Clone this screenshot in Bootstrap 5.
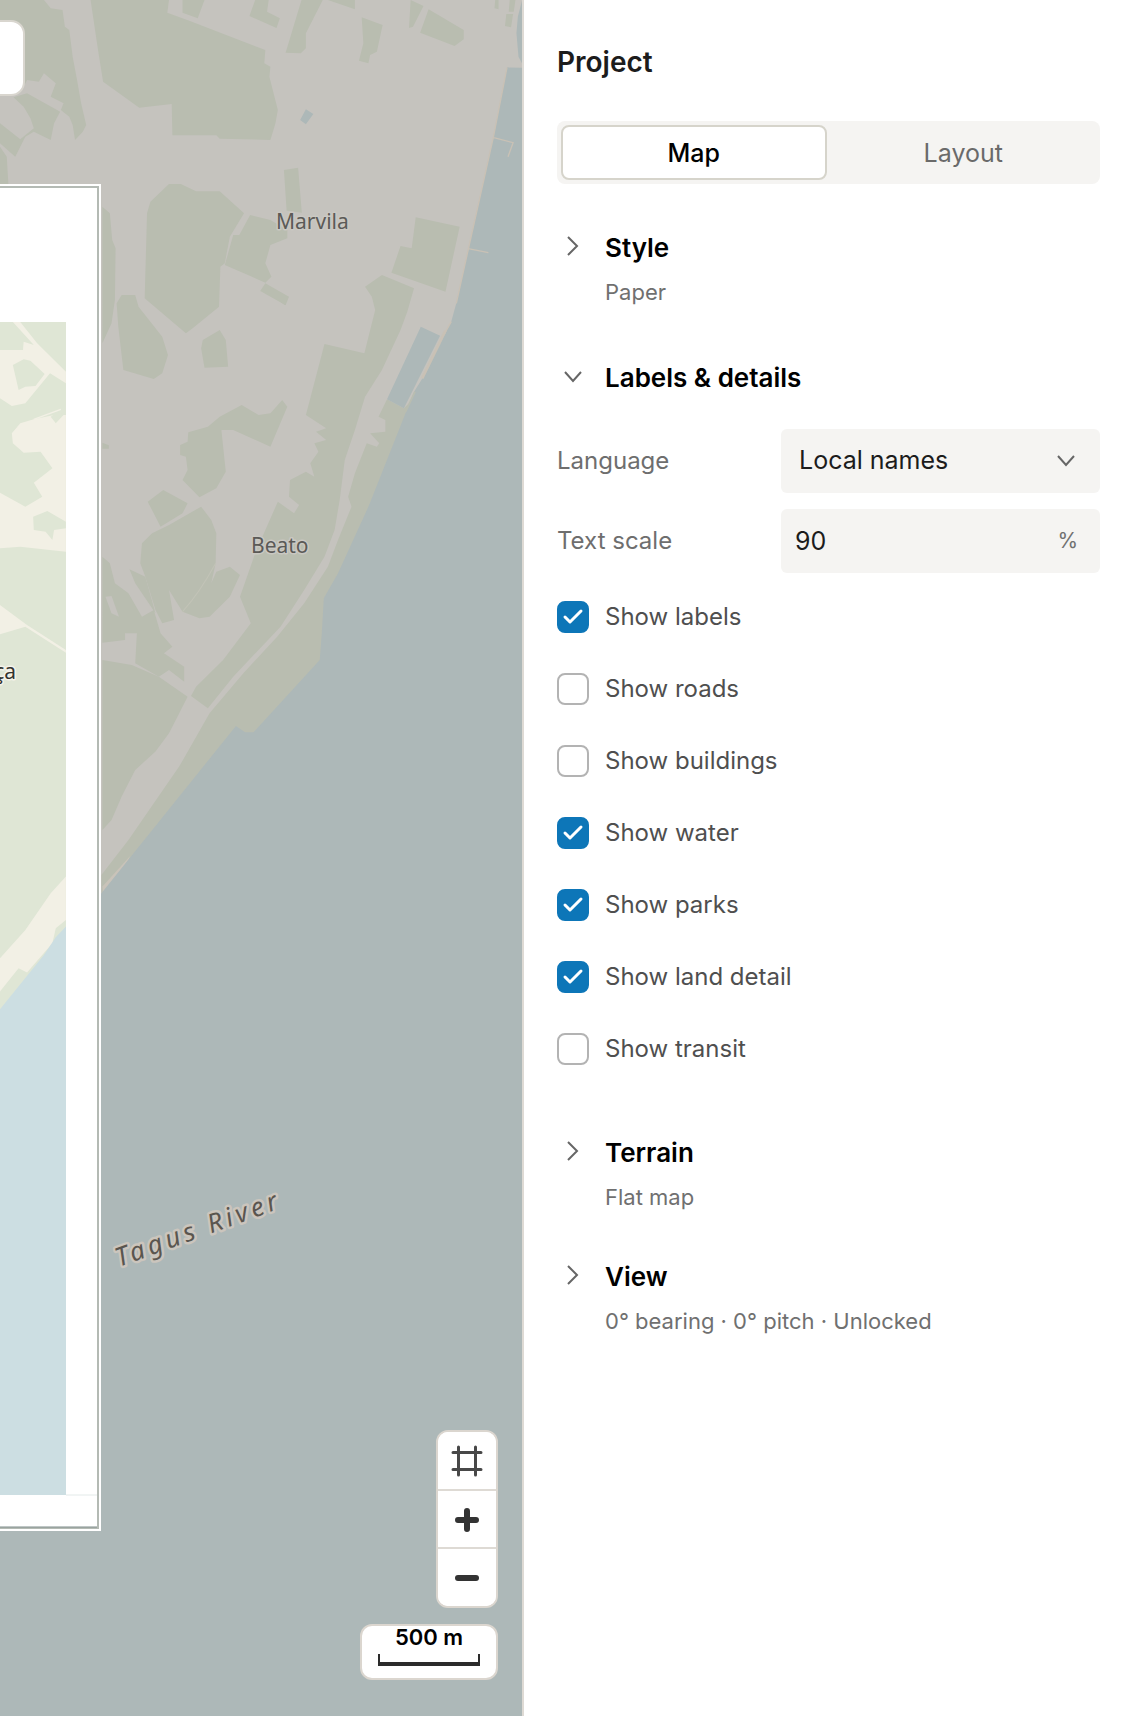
<!DOCTYPE html>
<html lang="en">
<head>
<meta charset="utf-8">
<meta name="viewport" content="width=device-width, initial-scale=1">
<title>Project map editor</title>
<link href="https://cdn.jsdelivr.net/npm/bootstrap@5.3.0/dist/css/bootstrap.min.css" rel="stylesheet">
<style>
  body { font-family: Inter, "Liberation Sans", sans-serif; font-size: 24px; line-height: 32px; color: #1c1c1c; background: #fff; }
  .map-area { min-width: 0; background: #adb8b8; overflow: hidden; }
  .map-canvas { position: absolute; inset: 0; width: 100%; height: 100%; }
  .map-canvas text { font-family: "Noto Sans", sans-serif; font-size: 21px; fill: #5b5a57; stroke: #cac8c2; stroke-width: 3px; paint-order: stroke; stroke-linejoin: round; }
  .map-canvas .river-name { font-size: 26px; font-style: italic; letter-spacing: 4px; fill: #5a554f; stroke: #cbc5bd; stroke-width: 5px; }
  .map-canvas .inset-name { fill: #33332f; stroke: #f5f3ea; }
  .toolbar-edge { position: absolute; left: -40px; top: 20px; width: 65px; height: 76px; background: #fff; border: 2px solid #d9d6cf; border-radius: 14px; }
  .map-tools { position: absolute; right: 24px; bottom: 36px; }
  .zoom-stack { width: 62px; border: 2px solid #dbd6cf; border-radius: 12px; overflow: hidden; background: #fff; }
  .zoom-stack .btn { height: 58px; border: 0; border-radius: 0; background: #fff; }
  .zoom-stack .btn + .btn { height: 59px; border-top: 2px solid #dedad4; }
  .scale-box { width: 138px; height: 56px; border: 2px solid #dbd6cf; border-radius: 12px; background: #fff; color: #000; font-size: 22px; line-height: 22px; font-weight: 600; }
  .scale-rule { width: 102px; height: 12px; border: 2px solid #2b2b2b; border-top: 0; border-bottom-width: 4px; margin-top: 6px; }
  .side-panel { flex: 0 0 608px; padding: 44px 30px 44px 33px; border-left: 2px solid #dedad4; background: #fff; }
  .panel-title { font-size: 28px; line-height: 36px; font-weight: 600; margin: 0 0 41px; color: #1c1c1c; }
  .tab-track { height: 63px; padding: 4px; background: #f5f4f2; border-radius: 8px; margin-bottom: 46px; }
  .tab-track .btn { flex: 1 1 0; font-size: 25px; line-height: 32px; font-weight: 400; padding: 0; color: #6a6a6a; border: 2px solid transparent; border-radius: 8px; }
  .tab-track .btn.active { background: #fff; border-color: #d6d4cb; color: #000; font-weight: 500; }
  .fold { font-size: 26px; line-height: 36px; font-weight: 600; color: #000; background: none; border: 0; padding: 0; text-align: left; }
  .fold svg { flex: none; margin-bottom: 4px; }
  .fold-note { margin: 10px 0 0 48px; font-size: 22px; line-height: 32px; color: #707070; }
  .group-open { margin-top: 52px; }
  .group-next { margin-top: 46px; }
  .fields { margin-top: 33px; }
  .field-label { width: 224px; flex: none; font-size: 24px; color: #6e6e6e; }
  .field { height: 64px; border: 0; border-radius: 6px; background-color: #f5f4f2; color: #1c1c1c; font-size: 25px; }
  select.field { padding: 0 60px 0 18px; background-size: 20px 20px; background-position: right 24px center;
    background-image: url("data:image/svg+xml,%3Csvg xmlns='http://www.w3.org/2000/svg' viewBox='0 0 20 20'%3E%3Cpath d='M2 5l8 9 8-9' fill='none' stroke='%23666' stroke-width='2'/%3E%3C/svg%3E"); }
  input.field { padding: 0 14px; }
  .unit { padding: 0 22px; font-size: 21px; color: #707070; background: #f5f4f2; border: 0; border-radius: 6px; }
  .checks { margin: 28px 0 70px; gap: 40px; }
  .checks .form-check { min-height: 32px; margin: 0; padding: 0; gap: 16px; }
  .checks .form-check-input { flex: none; width: 32px; height: 32px; margin: 0; border: 2px solid #b3b3b3; border-radius: 8px; }
  .checks .form-check-input:checked { background-color: #0d76b8; border-color: #0d76b8;
    background-size: 28px 28px; background-image: url("data:image/svg+xml,%3Csvg xmlns='http://www.w3.org/2000/svg' viewBox='0 0 28 28'%3E%3Cpath d='M6 14l5 5L22 8' fill='none' stroke='%23fff' stroke-width='3' stroke-linecap='round' stroke-linejoin='round'/%3E%3C/svg%3E"); }
  .checks .form-check-label { font-size: 24px; color: #4f4f4f; }
</style>
</head>
<body>
<div class="d-flex min-vh-100">
  <main class="map-area position-relative flex-grow-1">
    <svg class="map-canvas" viewBox="0 0 522 1716" preserveAspectRatio="xMaxYMin slice" role="img" aria-label="Map of Marvila, Beato and the Tagus River">
      <defs><clipPath id="insetClip"><rect x="0" y="322" width="66" height="1173"/></clipPath></defs>
      <rect width="522" height="1716" fill="#c5c3be"/>
      <!-- northern districts -->
      <g transform="scale(.338 .3333)" fill="#b9bdb0">
        <path d="M0 0H130L150 25 185 30 192 80 205 90 215 170 228 240 240 310 255 375 245 395 222 420 215 375 205 350 180 330 188 310 150 290 165 250 130 220 115 245 80 240 70 260 0 285Z"/>
        <path d="M40 292L80 280 178 335 160 370 150 420 100 395 75 410 45 470 0 430V370L60 418 100 385 90 355 70 320ZM0 440L20 470 25 555H0Z"/>
        <path d="M268 0H500L495 38 560 62 785 150 782 190 800 200 797 230 822 330 815 370 800 420 650 416 640 406H510L508 312 412 323 305 245 290 150Z"/>
        <path d="M540 0H605L585 55 540 38ZM755 0H795L790 35 828 55 818 84 738 48ZM892 0H955L905 100V145L890 160 845 158ZM970 0H1050V28ZM1070 52L1132 75 1115 155 1095 165 1090 190 1062 182 1075 130ZM1215 0L1253 18 1222 80 1210 84ZM1268 28L1372 90V118L1345 138 1243 98ZM1465 0H1475V28L1463 25ZM1508 0H1525L1520 35H1505ZM1498 42H1518L1512 82 1494 78Z"/>
        <path d="M500 552H535L580 574H650L722 640 680 710 665 790 652 800 648 920 570 985 550 1000 428 895 435 640 445 605Z"/>
        <path d="M740 645L800 660 850 690V715L800 735 785 790 803 830 785 848 665 795 690 705H708ZM840 510L882 503 893 638 848 632ZM785 850L855 890 845 916 770 873ZM1230 652L1360 680 1318 875 1158 818 1185 738 1218 745Z"/>
      </g>
      <!-- Beato and the riverside -->
      <g transform="translate(0 300) scale(.338 .3333)" fill="#b9bdb0">
        <path d="M303-280L325-260 332-180 342-155 340 0 330 70 303 130ZM360-15H400L410 20 480 110 497 165 480 220 455 237 365 210 350 80 345 10ZM650 90L668 120 675 200 605 203 595 145 600 120ZM303 428L322 436V446H303ZM825 0H850L842 15Z"/>
        <path d="M715 315L765 345 800 340 835 300 850 320 800 440 690 390 655 390 668 515 640 565 590 592 540 540 555 510 550 470 533 465V435L555 425 557 397 615 380 650 350ZM483 570L555 610 540 640 475 680 437 605Z"/>
        <path d="M595 620L625 660 640 700 638 790 625 850 640 815 680 800 710 825 680 890 620 950 590 955 540 935 500 870 515 960 480 970 460 930 430 830 415 790 420 730 450 700 500 675Z"/>
        <path d="M303 770L325 790 340 850 380 880 420 950 455 930 475 1000 510 1040 485 1060 545 1100V1145L500 1110 470 1130 400 1090 405 1000H370V1020L303 1028ZM383 808L430 830 460 940 400 850Z"/>
        <path d="M303 1080L390 1095 470 1130 555 1190 525 1250 500 1300 460 1355 400 1410 360 1490 330 1560 303 1590Z"/>
        <path d="M1130-75L1225-35 1205 35 1185 90 1130 210 1080 290 1050 390 1020 480 1005 600 990 690 960 770 900 870 830 980 690 1130 615 1225 565 1188 580 1160 660 1080 742 970 710 890 755 760 785 690 822 605 870 640 885 615 855 590 858 540 905 515 930 530 918 490 942 455 930 430 965 420 935 395 965 385 905 345 960 132 1078 160 1110 30 1100-10 1080-40Z"/>
        <path d="M1145 298L1195 325 1240 280 1090 640 1000 830 962 890 970 1085 750 1330 698 1290 385 1690 300 1780V1725L380 1620 530 1400 620 1240 720 1120 820 1010 900 910 970 800 1000 720 1040 620 1030 590 1050 520 1085 430 1115 440 1122 430 1095 400 1140 395V360L1120 350Z"/>
        <path d="M303 1760L385 1668 380 1680 305 1785Z" fill="#c9c3b9"/>
        <path d="M312 890L330 888 352 950 330 940Z" fill="#c5c3be"/>
        <path d="M540 935Q590 880 638 790" fill="none" stroke="#c2c3b7" stroke-width="3"/>
        <path d="M1568-696L1500-698 1460-490 1385-150 1350 10 1335 65 1310 110 1250 235 1225 275 1090 620 1000 820 958 895 952 1000 946 1080 750 1297H725L698 1278 300 1780 0 2150V4300H1568ZM1245 80L1302 107 1195 325 1145 298ZM1568-900H1545L1532-850 1528-800 1534-730 1550-700H1568ZM905-572L927-558 905-527 888-540Z" fill="#adb8b8"/>
        <g fill="none" stroke="#c9c1b5" stroke-width="4"><path d="M1500-698L1460-490 1385-150 1350 10M1458-488L1518-472 1503-430M1385-154L1445-142M1335 65L1310 110"/><path d="M1318 92L1249 235" stroke-width="8"/><path d="M1228 275L1200 335" stroke="#b9bdb0" stroke-width="5"/></g>
      </g>
      <text x="276" y="229">Marvila</text>
      <text x="251" y="553">Beato</text>
      <text class="river-name" transform="translate(119 1267) rotate(-20)">Tagus River</text>
      <!-- print frame with the full-colour inset -->
      <path d="M0 184H101V1531H0Z" fill="#fff"/>
      <path d="M0 187H98V1528H0" fill="none" stroke="#b4bab4" stroke-width="2"/>
      <path d="M0 1527H97" stroke="#7f8c8a"/>
      <path d="M66 1495H97" stroke="#e3eae9"/>
      <g clip-path="url(#insetClip)">
        <rect x="0" y="322" width="66" height="1173" fill="#dfe6d5"/>
        <g transform="translate(0 300) scale(.338 .3333)">
          <path d="M38 66H60L110 130 195 215V250L148 220 75 310 35 318 0 295V150H68L70 125 100 135ZM195 345L160 345 100 358 60 370 35 400 38 430 70 458 120 455 155 505 100 548 125 590 75 620 0 578V745L60 740 195 755ZM0 915L80 975 195 1050V1058L75 980 0 1003ZM195 1730L150 1780 75 1890 0 1975V2075L55 2005 80 2018 155 1930 165 1885 195 1860Z" fill="#f2f0e5"/>
          <path d="M38 195L70 178 90 182 132 222 105 258 75 260 55 270ZM98 650L140 633 195 665V685L160 690 155 720 135 695 100 690ZM150 350L170 335 188 345 165 370Z" fill="#dfe6d5"/>
          <path d="M100 358L180 328" stroke="#f2f0e5" stroke-width="4"/>
          <path d="M200 1875L165 1912 130 1965 0 2128V3600H200Z" fill="#ccdee2"/>
        </g>
        <text class="inset-name" x="16" y="679" text-anchor="end">ça</text>
      </g>
    </svg>
    <div class="toolbar-edge"></div>
    <div class="map-tools d-flex flex-column align-items-end gap-3">
      <div class="zoom-stack btn-group-vertical">
        <button class="btn d-flex align-items-center justify-content-center p-0 w-100" type="button" aria-label="Fit frame"><svg width="32" height="32" viewBox="0 0 32 32" fill="none" stroke="#484848" stroke-width="3" stroke-linecap="round"><path d="M2 7.5h28M2 24.500h28M7.500 2v28M24.500 2v28"/></svg></button>
        <button class="btn d-flex align-items-center justify-content-center p-0 w-100" type="button" aria-label="Zoom in"><svg width="24" height="24" viewBox="0 0 24 24" stroke="#333" stroke-width="6" stroke-linecap="round"><path d="M3 12h18M12 3v18"/></svg></button>
        <button class="btn d-flex align-items-center justify-content-center p-0 w-100" type="button" aria-label="Zoom out"><svg width="24" height="24" viewBox="0 0 24 24" stroke="#333" stroke-width="6" stroke-linecap="round"><path d="M3 12h18"/></svg></button>
      </div>
      <div class="scale-box d-flex flex-column align-items-center"><span>500 m</span><div class="scale-rule"></div></div>
    </div>
  </main>

  <aside class="side-panel">
    <h1 class="panel-title">Project</h1>
    <div class="tab-track d-flex gap-1" role="tablist">
      <button class="btn active" type="button" role="tab" aria-selected="true">Map</button>
      <button class="btn" type="button" role="tab" aria-selected="false">Layout</button>
    </div>

    <section>
      <button class="fold d-flex align-items-center gap-3" type="button"><svg width="32" height="20" viewBox="0 0 32 20" fill="none" stroke="#666" stroke-width="2"><path d="M11 1l9 9-9 9"/></svg>Style</button>
      <p class="fold-note">Paper</p>
    </section>

    <section class="group-open">
      <button class="fold d-flex align-items-center gap-3" type="button"><svg width="32" height="20" viewBox="0 0 32 20" fill="none" stroke="#666" stroke-width="2"><path d="M8 6l8 9 8-9"/></svg>Labels &amp; details</button>
      <div class="fields d-flex flex-column gap-3">
        <div class="d-flex align-items-center">
          <label class="field-label" for="language">Language</label>
          <select class="form-select field" id="language"><option>Local names</option></select>
        </div>
        <div class="d-flex align-items-center">
          <label class="field-label" for="textScale">Text scale</label>
          <div class="input-group">
            <input class="form-control field" id="textScale" type="text" inputmode="numeric" value="90">
            <span class="input-group-text unit">%</span>
          </div>
        </div>
      </div>
      <div class="checks d-flex flex-column">
        <div class="form-check d-flex align-items-center"><input class="form-check-input" type="checkbox" id="cLabels" checked><label class="form-check-label" for="cLabels">Show labels</label></div>
        <div class="form-check d-flex align-items-center"><input class="form-check-input" type="checkbox" id="cRoads"><label class="form-check-label" for="cRoads">Show roads</label></div>
        <div class="form-check d-flex align-items-center"><input class="form-check-input" type="checkbox" id="cBuildings"><label class="form-check-label" for="cBuildings">Show buildings</label></div>
        <div class="form-check d-flex align-items-center"><input class="form-check-input" type="checkbox" id="cWater" checked><label class="form-check-label" for="cWater">Show water</label></div>
        <div class="form-check d-flex align-items-center"><input class="form-check-input" type="checkbox" id="cParks" checked><label class="form-check-label" for="cParks">Show parks</label></div>
        <div class="form-check d-flex align-items-center"><input class="form-check-input" type="checkbox" id="cLand" checked><label class="form-check-label" for="cLand">Show land detail</label></div>
        <div class="form-check d-flex align-items-center"><input class="form-check-input" type="checkbox" id="cTransit"><label class="form-check-label" for="cTransit">Show transit</label></div>
      </div>
    </section>

    <section>
      <button class="fold d-flex align-items-center gap-3" type="button"><svg width="32" height="20" viewBox="0 0 32 20" fill="none" stroke="#666" stroke-width="2"><path d="M11 1l9 9-9 9"/></svg>Terrain</button>
      <p class="fold-note">Flat map</p>
    </section>
    <section class="group-next">
      <button class="fold d-flex align-items-center gap-3" type="button"><svg width="32" height="20" viewBox="0 0 32 20" fill="none" stroke="#666" stroke-width="2"><path d="M11 1l9 9-9 9"/></svg>View</button>
      <p class="fold-note">0° bearing · 0° pitch · Unlocked</p>
    </section>
  </aside>
</div>
<script src="https://cdn.jsdelivr.net/npm/bootstrap@5.3.0/dist/js/bootstrap.bundle.min.js"></script>
</body>
</html>
